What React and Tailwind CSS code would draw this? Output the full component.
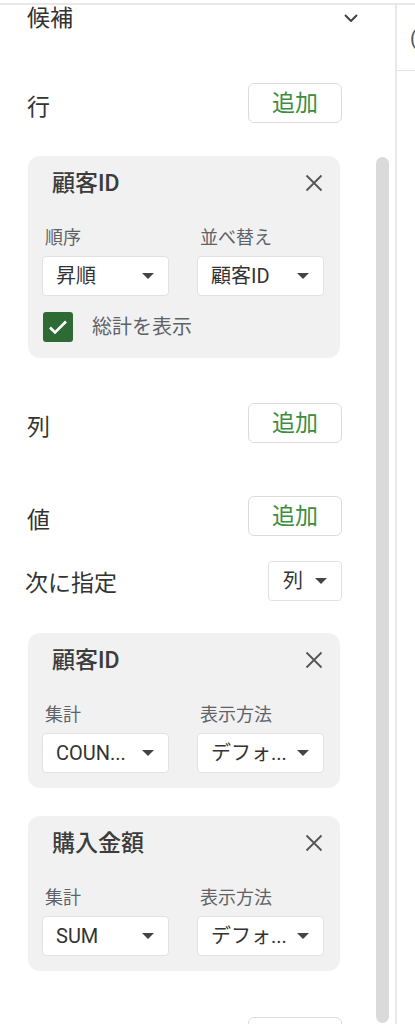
import React from "react";

const FONT = { fontFamily: "Roboto, 'Noto Sans CJK JP', sans-serif" };

function Caret() {
  return (
    <svg width="12" height="6" viewBox="0 0 12 6" className="shrink-0">
      <path d="M0 0h12L6 6z" fill="#444" />
    </svg>
  );
}

function CloseIcon() {
  return (
    <svg width="20" height="20" viewBox="0 0 20 20">
      <path d="M2.5 2.5l15 15M17.5 2.5l-15 15" stroke="#555" strokeWidth="1.8" fill="none" />
    </svg>
  );
}

function AddButton() {
  return (
    <button className="flex h-10 w-[94px] shrink-0 items-center justify-center rounded-md border border-[#dcdcdc] bg-white text-[23px] leading-none text-[#3b8e3f]">
      追加
    </button>
  );
}

function Select({ value }) {
  return (
    <div className="flex h-10 items-center justify-between rounded border border-[#e2e2e2] bg-white pl-[13px] pr-[14px] text-[20px] leading-none text-[#333]">
      <span>{value}</span>
      <Caret />
    </div>
  );
}

function FieldCard({ title, left, right, children }) {
  return (
    <div className="rounded-xl bg-[#f1f1f1] pb-[15px] pl-[14px] pr-4 pt-[13px]">
      <div className="flex h-7 items-center justify-between pl-[10px]">
        <span className="text-[23px] font-medium leading-none text-[#3c3c3c]">{title}</span>
        <CloseIcon />
      </div>
      <div className="mt-[31px] grid grid-cols-2 gap-x-[28px]">
        <div className="h-5 pl-[3px] text-[18px] leading-5 text-[#5f6368]">{left.label}</div>
        <div className="h-5 pl-[3px] text-[18px] leading-5 text-[#5f6368]">{right.label}</div>
        <div className="mt-2">
          <Select value={left.value} />
        </div>
        <div className="mt-2">
          <Select value={right.value} />
        </div>
      </div>
      {children}
    </div>
  );
}

function SectionRow({ label, className = "" }) {
  return (
    <div className={`flex h-10 items-center justify-between ${className}`}>
      <span className="mt-2 pl-[27px] text-[23px] leading-none text-[#333]">{label}</span>
      <AddButton />
    </div>
  );
}

export default function App() {
  return (
    <div className="flex h-[1024px] w-[415px] flex-col overflow-hidden bg-white" style={FONT}>
      <div className="h-[3px] shrink-0" />
      <div className="flex min-h-0 flex-1 border-t-2 border-[#e8e8e8]">
        {/* editor panel */}
        <div className="w-[376px] shrink-0 pr-[34px]">
          <div className="flex h-[26px] items-center justify-between">
            <span className="pl-[27px] text-[23px] leading-none text-[#333]">候補</span>
            <svg width="14" height="8" viewBox="0 0 14 8" className="-mr-[16px]">
              <path d="M1 1l6 6 6-6" stroke="#444" strokeWidth="2" fill="none" />
            </svg>
          </div>

          <SectionRow label="行" className="mt-[52px]" />

          <div className="ml-7 mr-[2px] mt-[33px]">
            <FieldCard
              title="顧客ID"
              left={{ label: "順序", value: "昇順" }}
              right={{ label: "並べ替え", value: "顧客ID" }}
            >
              <div className="mt-4 flex h-[30px] items-center">
                <div className="ml-px flex h-[30px] w-[30px] items-center justify-center rounded-[3px] bg-[#2e6b34]">
                  <svg width="20" height="16" viewBox="0 0 20 16">
                    <path d="M2 8.5l5 5L18 2.5" stroke="#fff" strokeWidth="2.6" fill="none" />
                  </svg>
                </div>
                <span className="ml-[19px] text-[20px] leading-none text-[#5f6368]">総計を表示</span>
              </div>
              <div className="h-px" />
            </FieldCard>
          </div>

          <SectionRow label="列" className="mt-[45px]" />
          <SectionRow label="値" className="mt-[53px]" />

          <div className="mt-[25px] flex h-10 items-center justify-between">
            <span className="mt-1 pl-[25px] text-[23px] leading-none text-[#333]">次に指定</span>
            <div className="flex h-10 w-[74px] items-center justify-between rounded border border-[#e2e2e2] bg-white pl-[14px] pr-[14px] text-[20px] leading-none text-[#333]">
              <span>列</span>
              <Caret />
            </div>
          </div>

          <div className="ml-7 mr-[2px] mt-[32px]">
            <FieldCard
              title="顧客ID"
              left={{ label: "集計", value: "COUN..." }}
              right={{ label: "表示方法", value: "デフォ..." }}
            />
          </div>

          <div className="ml-7 mr-[2px] mt-[28px]">
            <FieldCard
              title="購入金額"
              left={{ label: "集計", value: "SUM" }}
              right={{ label: "表示方法", value: "デフォ..." }}
            />
          </div>

          <SectionRow label="" className="mt-[46px]" />
        </div>

        {/* scrollbar */}
        <div className="w-[13px] shrink-0">
          <div className="mt-[152px] h-[866px] rounded-full bg-[#dadada]" />
        </div>

        {/* right strip */}
        <div className="ml-[6px] flex-1 border-l-2 border-[#e8e8e8]">
          <div className="flex h-[66px] items-start border-b border-[#e4e4e4] pl-[13px] pt-[18px] text-[20px] text-[#555]">
            (
          </div>
        </div>
      </div>
    </div>
  );
}
